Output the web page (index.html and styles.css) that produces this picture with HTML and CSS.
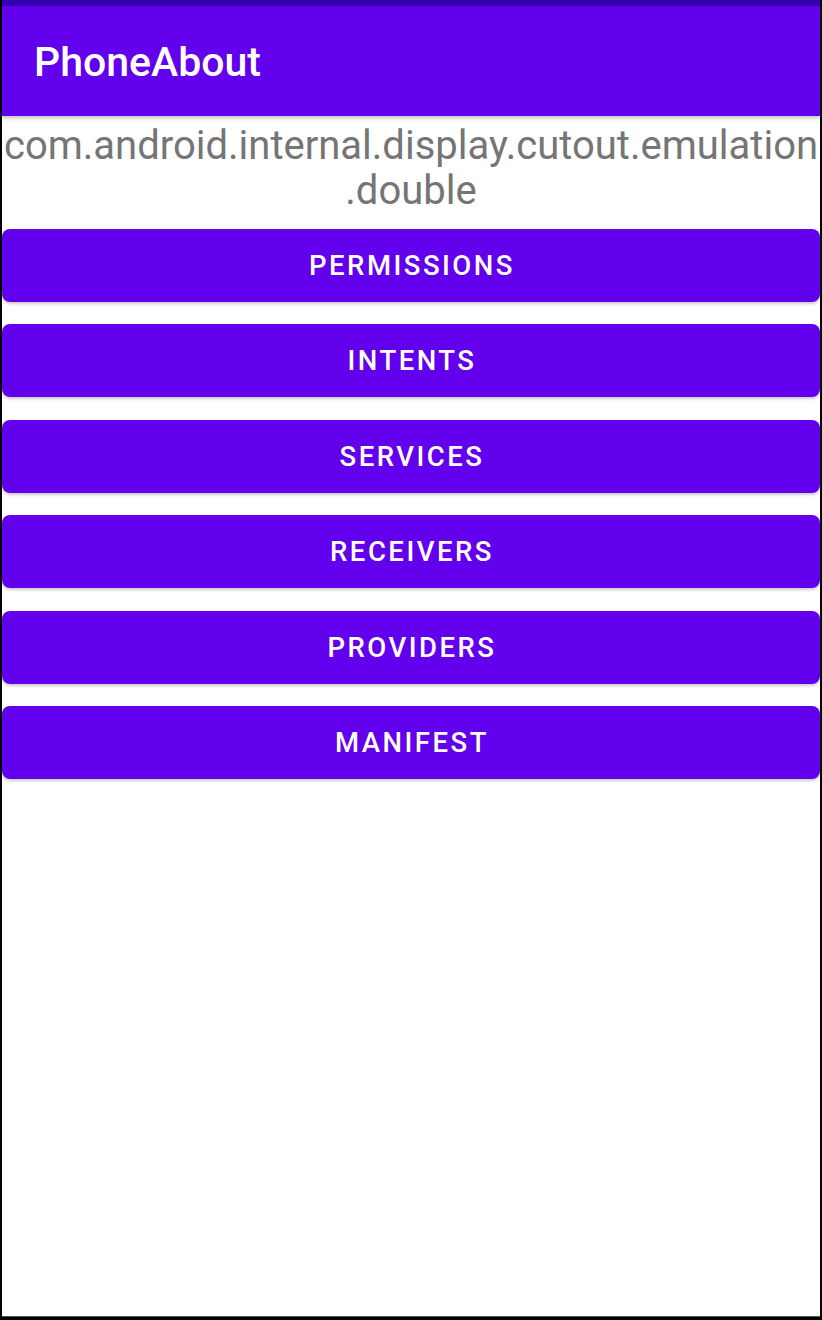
FILE: index.html
```html
<!DOCTYPE html>
<html>
<head>
<meta charset="utf-8">
<link rel="stylesheet" href="styles.css">
</head>
<body>
<div class="screen">
  <div class="statusbar"></div>
  <header class="appbar"><h1 class="title">PhoneAbout</h1></header>
  <main class="content">
    <p class="pkg">com.android.internal.display.cutout.emulation<wbr>.double</p>
    <div class="buttons">
      <button class="btn">PERMISSIONS</button>
      <button class="btn">INTENTS</button>
      <button class="btn">SERVICES</button>
      <button class="btn">RECEIVERS</button>
      <button class="btn">PROVIDERS</button>
      <button class="btn">MANIFEST</button>
    </div>
  </main>
</div>
</body>
</html>
```
FILE: styles.css
```css
html, body {
  margin: 0;
  padding: 0;
  background: #000;
  height: 1320px;
  overflow: hidden;
}
.screen {
  margin-left: 2px;
  width: 818px;
  height: 1316px;
  background: #fff;
  border-bottom: 1px solid #555;
  display: flex;
  flex-direction: column;
  font-family: Roboto, "Noto Sans", sans-serif;
}
.statusbar {
  height: 6px;
  background: #3700b3;
}
.appbar {
  height: 110px;
  background: #6200ee;
  display: flex;
  align-items: center;
  padding-left: 32px;
  box-shadow: 0 2px 4px rgba(0,0,0,0.25);
  position: relative;
  z-index: 1;
}
.title {
  margin: 0;
  color: #fff;
  font-weight: 500;
  font-size: 41px;
  line-height: 1;
  margin-top: 2px;
}
.content {
  display: flex;
  flex-direction: column;
}
.pkg {
  margin: 0;
  padding-top: 7px;
  text-align: center;
  color: #757575;
  font-size: 40px;
  line-height: 45px;
}
.buttons {
  margin-top: 16px;
  display: flex;
  flex-direction: column;
  gap: 22.4px;
}
.btn {
  height: 73px;
  border: none;
  border-radius: 8px;
  background: #6200ee;
  color: #fff;
  font-family: Roboto, sans-serif;
  font-weight: 500;
  font-size: 27.5px;
  letter-spacing: 2.5px;
  box-shadow: 0 2px 3px rgba(0,0,0,0.2);
  padding: 0 0 0 2px;
}
```
